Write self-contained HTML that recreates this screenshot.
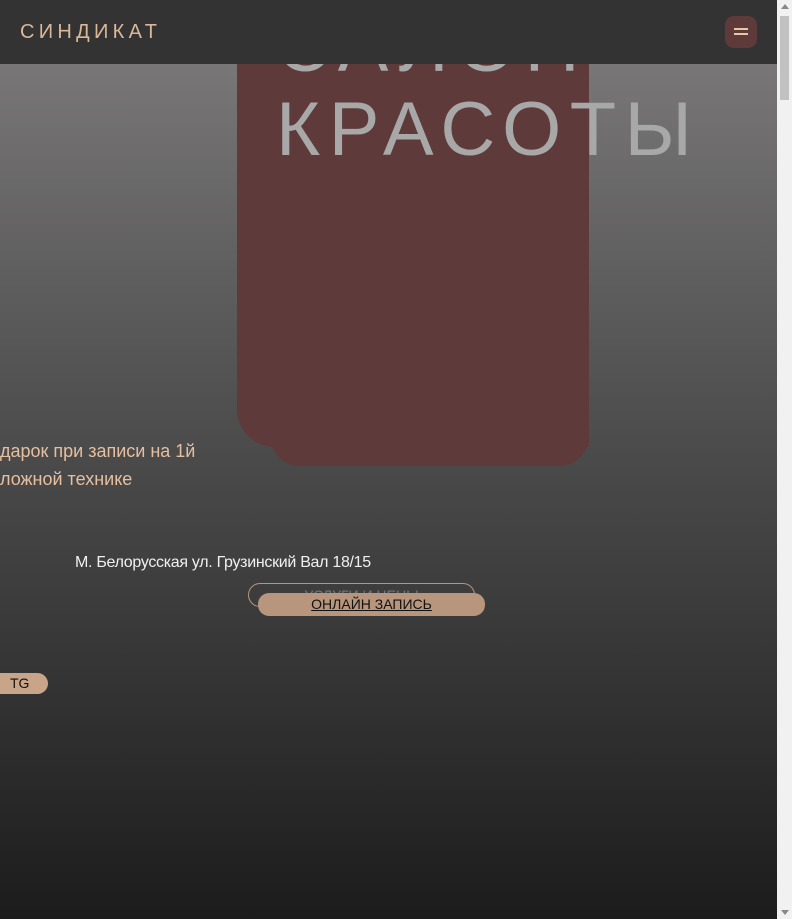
<!DOCTYPE html>
<html><head><meta charset="utf-8"><style>
html,body{margin:0;padding:0;width:792px;height:919px;overflow:hidden;}
body{font-family:"Liberation Sans",sans-serif;position:relative;background:linear-gradient(to bottom,#787676 64px,#4a4a4a 460px,#3a3a3a 620px,#1c1c1c 919px);}
.hdr{position:absolute;left:0;top:0;width:777px;height:64px;background:#333;z-index:5;}
.logo{position:absolute;left:20px;top:21px;color:#d9b897;font-size:20px;letter-spacing:4.3px;}
.menu{position:absolute;left:725px;top:16px;width:32px;height:32px;border-radius:9px;background:#5e3a3a;}
.menu i{position:absolute;left:9px;width:14px;height:2px;background:#e8c7a5;}
.b1{position:absolute;left:237px;top:64px;width:352px;height:383px;background:#5e3a3a;border-radius:0 0 0 38px;}
.b2{position:absolute;left:270px;top:300px;width:319px;height:166px;background:#5e3a3a;border-radius:0 0 30px 30px;}
.t{position:absolute;left:276px;color:#a8a8a8;font-size:76px;letter-spacing:8.5px;line-height:76px;}
.gift{position:absolute;left:0;top:437px;color:#e6bfa0;font-size:18px;line-height:28px;}
.addr{position:absolute;left:75px;top:554px;color:#f0f0f0;font-size:16px;letter-spacing:-0.3px;}
.o{position:absolute;left:248px;top:583px;width:225px;height:22px;border:1px solid #b8957d;border-radius:12px;color:#777;font-size:14px;text-align:center;line-height:22px;overflow:hidden;}
.f{position:absolute;left:258px;top:593px;width:227px;height:23px;background:#b8957d;border-radius:11px;color:#111;font-size:14px;text-align:center;line-height:23px;text-decoration:underline;}
.tg{position:absolute;left:-10px;top:673px;width:58px;height:21px;background:#c8a488;border-radius:0 11px 11px 0;color:#111;font-size:14px;line-height:21px;padding-left:20px;box-sizing:border-box;}
.sb{position:absolute;right:0;top:0;width:15px;height:919px;background:#f1f1f1;}
.sb .th{position:absolute;left:3px;top:16px;width:9px;height:84px;background:#c1c1c1;}
</style></head><body>
<div class="b1"></div><div class="b2"></div>
<div class="t" style="top:8px">САЛОН</div>
<div class="t" style="top:92px">КРАСОТЫ</div>
<div class="hdr"><div class="logo">СИНДИКАТ</div><div class="menu"><i style="top:12px"></i><i style="top:17px"></i></div></div>
<div class="gift">дарок при записи на 1й<br>ложной технике</div>
<div class="addr">М. Белорусская ул. Грузинский Вал 18/15</div>
<div class="o">УСЛУГИ И ЦЕНЫ</div>
<div class="f">ОНЛАЙН ЗАПИСЬ</div>
<div class="tg">TG</div>
<div class="sb"><div class="th"></div><div style="position:absolute;left:4px;top:4px;border:4px solid transparent;border-bottom:5px solid #888;border-top:0"></div><div style="position:absolute;left:4px;bottom:4px;border:4px solid transparent;border-top:5px solid #888;border-bottom:0"></div></div>
</body></html>
